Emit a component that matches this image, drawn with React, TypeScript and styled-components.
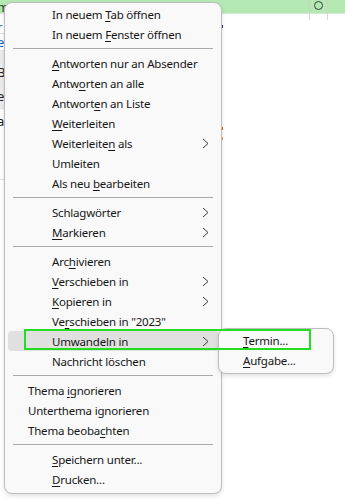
import React from "react"
import styled, { createGlobalStyle } from "styled-components"

const GlobalStyle = createGlobalStyle`
  html, body {
    margin: 0;
    padding: 0;
    background: #fff;
  }
  body {
    font-family: "Noto Sans", "Liberation Sans", sans-serif;
  }
`

const Page = styled.div`
  position: relative;
  width: 345px;
  height: 500px;
  overflow: hidden;
  background: #fff;
`

/* ---------- the mail list behind the menu ---------- */

const HeaderRow = styled.div`
  display: grid;
  grid-template-columns: 309px 18px 18px;
  height: 13px;
  background: #b4e9b4;
  border-bottom: 1px solid #d4ead4;
`
const HeaderCell = styled.div<{ $line?: boolean }>`
  display: flex;
  align-items: flex-start;
  justify-content: flex-start;
  border-left: ${p => (p.$line ? "1px solid #cfcfcf" : "none")};
  font-size: 12px;
  color: #2f4f2f;
  line-height: 10px;
  overflow: hidden;
`
const Ring = styled.span`
  width: 7px;
  height: 7px;
  margin: 1px auto 0;
  border: 1px solid #3c3c3c;
  border-radius: 50%;
`
const GridStub = styled.div`
  display: grid;
  grid-template-columns: 309px 18px 18px;
  height: 6px;
  & > div + div {
    border-left: 1px solid #d8d8d8;
  }
`
const Body = styled.div`
  display: flex;
  justify-content: space-between;
`
const ListPane = styled.div`
  width: 10px;
  display: flex;
  flex-direction: column;
`
const SidePane = styled.div`
  width: 124px;
  display: flex;
  flex-direction: column;
  padding-top: 2px;
`
const ListRow = styled.div<{ $h: number; $shade?: boolean }>`
  display: flex;
  flex-direction: column;
  justify-content: space-around;
  height: ${p => p.$h}px;
  background: ${p => (p.$shade ? "#ececec" : "#fff")};
  border-bottom: 1px solid #e2e2e2;
`
const SideRow = styled.div<{ $h: number }>`
  height: ${p => p.$h}px;
  display: flex;
  align-items: center;
`
const Frag = styled.span<{ $c?: string }>`
  display: block;
  margin-left: -3px;
  font-size: 13px;
  line-height: 14px;
  color: ${p => p.$c || "#222"};
`
const Dot = styled.span<{ $c: string }>`
  width: 2px;
  height: 3px;
  background: ${p => p.$c};
`

/* ---------- context menu ---------- */

const Menu = styled.div`
  position: absolute;
  left: 4px;
  top: 2px;
  width: 211px;
  padding: 1px 2px 4px 3px;
  background: #f9f9f9;
  border: 1px solid #bdbdbd;
  border-radius: 8px;
  box-shadow: 0 2px 4px rgba(0, 0, 0, 0.12);
`
const SubMenu = styled(Menu)`
  left: 218px;
  top: 328px;
  width: 108px;
  padding: 1px 3px 3px 3px;
`
const Item = styled.div<{ $flush?: boolean; $active?: boolean; $inset?: number }>`
  display: flex;
  align-items: center;
  justify-content: space-between;
  height: 20px;
  padding-left: ${p => (p.$inset !== undefined ? p.$inset : p.$flush ? 20 : 44)}px;
  padding-right: 10px;
  border-radius: 4px;
  background: ${p => (p.$active ? "#e0e0e0" : "transparent")};
  font-size: 11.5px;
  letter-spacing: -0.2px;
  color: #161616;
  white-space: nowrap;
`
const Key = styled.span`
  text-decoration: underline;
  text-underline-offset: 2px;
`
const Separator = styled.div`
  height: 1px;
  margin: 4px 6px 4px 5px;
  background: #a9a9a9;
`
const Focus = styled.div`
  position: absolute;
  left: 24px;
  top: 329px;
  width: 283px;
  height: 17px;
  border: 2px solid #22dd22;
`

const Chevron = () => (
  <svg width="7" height="11" viewBox="0 0 7 11">
    <polyline points="1,1 6,5.5 1,10" fill="none" stroke="#3a3a3a" strokeWidth="1" />
  </svg>
)

type Entry =
  | "sep"
  | { label: string; key?: number; sub?: boolean; flush?: boolean; active?: boolean }

const entries: Entry[] = [
  { label: "In neuem Tab öffnen", key: 9 },
  { label: "In neuem Fenster öffnen", key: 9 },
  "sep",
  { label: "Antworten nur an Absender", key: 0 },
  { label: "Antworten an alle", key: 4 },
  { label: "Antworten an Liste", key: 7 },
  { label: "Weiterleiten", key: 0 },
  { label: "Weiterleiten als", key: 11, sub: true },
  { label: "Umleiten" },
  { label: "Als neu bearbeiten", key: 8 },
  "sep",
  { label: "Schlagwörter", sub: true },
  { label: "Markieren", key: 0, sub: true },
  "sep",
  { label: "Archivieren", key: 3 },
  { label: "Verschieben in", key: 0, sub: true },
  { label: "Kopieren in", key: 0, sub: true },
  { label: 'Verschieben in "2023"', key: 2 },
  { label: "Umwandeln in", key: 1, sub: true, active: true },
  { label: "Nachricht löschen" },
  "sep",
  { label: "Thema ignorieren", key: 6, flush: true },
  { label: "Unterthema ignorieren", flush: true },
  { label: "Thema beobachten", key: 11, flush: true },
  "sep",
  { label: "Speichern unter...", key: 0 },
  { label: "Drucken...", key: 0 },
]

const Label = ({ text, at }: { text: string; at?: number }) =>
  at === undefined ? (
    <span>{text}</span>
  ) : (
    <span>
      {text.slice(0, at)}
      <Key>{text[at]}</Key>
      {text.slice(at + 1)}
    </span>
  )

const App: React.FC = () => {
  return (
    <Page>
      <GlobalStyle />
      <HeaderRow>
        <HeaderCell>
          <Frag $c="#2f4f2f">m</Frag>
        </HeaderCell>
        <HeaderCell $line>
          <Ring />
        </HeaderCell>
        <HeaderCell $line />
      </HeaderRow>
      <GridStub>
        <div />
        <div />
        <div />
      </GridStub>
      <Body>
        <ListPane>
          <ListRow $h={13}>
            <Frag $c="#1f62c4">r</Frag>
          </ListRow>
          <ListRow $h={16}>
            <Frag $c="#1f62c4">e</Frag>
          </ListRow>
          <ListRow $h={57} $shade>
            <Frag />
            <Frag>B</Frag>
            <Frag>e</Frag>
          </ListRow>
          <ListRow $h={70}>
            <Frag>a</Frag>
            <Frag $c="#1f62c4">i</Frag>
            <Frag>:</Frag>
          </ListRow>
        </ListPane>
        <SidePane>
          <SideRow $h={8}>
            <Dot $c="#5a2a9a" />
          </SideRow>
          <SideRow $h={95} />
          <SideRow $h={6}>
            <Dot $c="#c46a1a" />
          </SideRow>
          <SideRow $h={14}>
            <Dot $c="#e0a060" />
          </SideRow>
        </SidePane>
      </Body>

      <Menu>
        {entries.map((e, i) =>
          e === "sep" ? (
            <Separator key={i} />
          ) : (
            <Item key={i} $flush={e.flush} $active={e.active}>
              <Label text={e.label} at={e.key} />
              {e.sub && <Chevron />}
            </Item>
          )
        )}
      </Menu>

      <SubMenu>
        <Item $inset={21}>
          <Label text="Termin..." at={0} />
        </Item>
        <Item $inset={21}>
          <Label text="Aufgabe..." at={0} />
        </Item>
      </SubMenu>

      <Focus />
    </Page>
  )
}

export default App
